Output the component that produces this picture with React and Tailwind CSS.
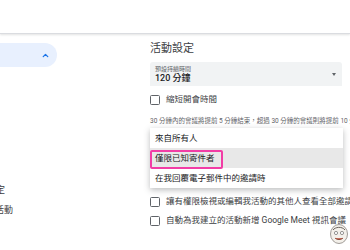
import React from "react";

const font = { fontFamily: '"Roboto", "Noto Sans CJK TC", sans-serif' };

const Box = () => (
  <span className="block h-[10px] w-[10px] shrink-0 rounded-[1.5px] border-[1.5px] border-[#5f6368] bg-white" />
);

const CheckRow = ({ label }) => (
  <div className="flex h-[19px] items-center gap-[6px]">
    <Box />
    <span className="whitespace-nowrap text-[8.5px] leading-none text-[#3c4043]">{label}</span>
  </div>
);

const menuItems = ["來自所有人", "僅限已知寄件者", "在我回覆電子郵件中的邀請時"];

const Watermark = () => (
  <svg viewBox="0 0 20 22" className="h-[22px] w-[20px]" aria-hidden="true">
    <ellipse cx="10" cy="11" rx="8.5" ry="9.5" fill="#f3f0ea" stroke="#8a8580" strokeWidth="0.8" />
    <path d="M4 7c2-3 9-4 12 0" stroke="#6b655f" strokeWidth="1" fill="none" />
    <circle cx="7" cy="10" r="1.6" fill="#fff" stroke="#555" strokeWidth="0.6" />
    <circle cx="13" cy="10" r="1.6" fill="#fff" stroke="#555" strokeWidth="0.6" />
    <path d="M6 15c2 2 6 2 8 0" stroke="#8b4a3a" strokeWidth="1" fill="#c9705e" />
  </svg>
);

const NavCut = ({ width, label }) => (
  <div className="flex justify-end overflow-hidden" style={{ width }}>
    <span className="shrink-0 whitespace-nowrap text-[9px] leading-[20px] text-[#3c4043]">{label}</span>
  </div>
);

export default function App() {
  return (
    <div className="relative h-[250px] w-[350px] overflow-hidden bg-white" style={font}>
      <header className="h-[34px] border-b border-[#dadce0] shadow-[0_1px_2px_rgba(60,64,67,0.15)]" />

      <div className="flex">
        <aside className="w-[150px] shrink-0">
          <div className="mt-[9px] flex h-[24px] w-[57px] items-center justify-end rounded-r-full bg-[#e8f0fe] pr-[7px]">
            <svg viewBox="0 0 24 24" className="h-[9px] w-[9px] text-[#1a73e8]" aria-hidden="true">
              <path d="M6 15l6-6 6 6" stroke="currentColor" strokeWidth="3.5" fill="none" strokeLinecap="round" strokeLinejoin="round" />
            </svg>
          </div>
          <div className="mt-[113px]">
            <NavCut width="5px" label="一般設定" />
            <NavCut width="13px" label="新增活動" />
          </div>
        </aside>

        <main className="w-[200px] shrink-0">
          <h2 className="mt-[8px] h-[14px] text-[11px] leading-[14px] text-[#3c4043]">活動設定</h2>

          <div className="mt-[6px] flex h-[24px] w-[192px] items-center rounded-t-[3px] bg-[#f1f3f4] pl-[5px] pr-[6px]">
            <div className="flex-1">
              <div className="text-[6px] leading-[8px] text-[#5f6368]">預設持續時間</div>
              <div className="text-[9px] font-medium leading-[11px] text-[#202124]">120 分鐘</div>
            </div>
            <span className="h-0 w-0 border-x-[2.5px] border-t-[3px] border-x-transparent border-t-[#5f6368]" />
          </div>

          <div className="mt-[4px]">
            <CheckRow label="縮短開會時間" />
          </div>

          <p className="mt-[7px] whitespace-nowrap text-[6.5px] leading-[10px] text-[#5f6368]">
            30 分鐘內的會議將提前 5 分鐘結束，超過 30 分鐘的會議則將提前 10 分鐘結束
          </p>

          <div className="relative h-[66px]">
            <div className="absolute left-0 top-[2px] w-[193px] bg-white shadow-[0_2px_6px_rgba(60,64,67,0.35)]">
              {menuItems.map((item, i) => (
                <div
                  key={item}
                  className={`relative flex h-[20px] items-center whitespace-nowrap pl-[5px] text-[8.5px] text-[#202124] ${i === 1 ? "bg-[#e8e8e8]" : ""}`}
                >
                  {i === 1 && (
                    <span className="absolute left-0 top-[2px] h-[19px] w-[73px] rounded-[2px] border-2 border-[#f23da6]" />
                  )}
                  <span className="relative">{item}</span>
                </div>
              ))}
            </div>
          </div>

          <CheckRow label="讓有權限檢視或編輯我活動的其他人查看全部邀請" />
          <CheckRow label="自動為我建立的活動新增 Google Meet 視訊會議" />
        </main>
      </div>

      <div className="absolute bottom-[5px] right-[1px]">
        <Watermark />
      </div>
    </div>
  );
}
